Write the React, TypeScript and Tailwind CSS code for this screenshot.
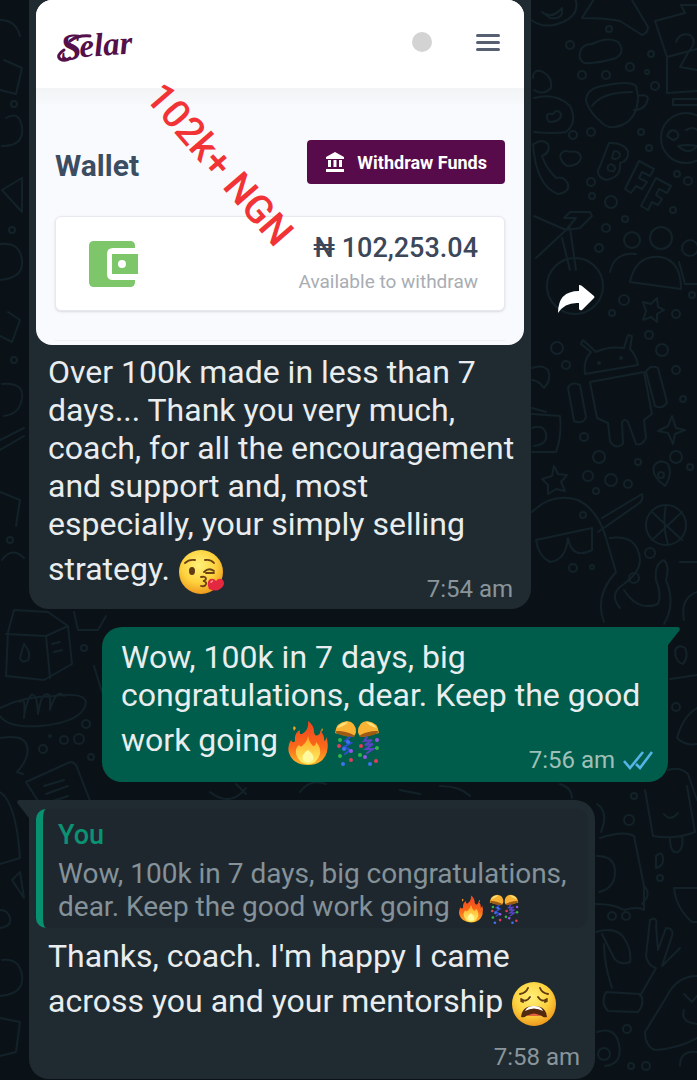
import type { ReactNode } from "react";

function Doodles() {
  return (
    <svg
      className="absolute inset-0 h-full w-full"
      viewBox="0 0 697 1080"
      preserveAspectRatio="xMidYMin slice"
      fill="none"
      stroke="#132128"
      strokeWidth="2"
      strokeLinecap="round"
      strokeLinejoin="round"
      aria-hidden="true"
    >
      {/* right side, top */}
      <path d="M531 20q14 10 32 2t12-24M542 12q10 8 20-4q2 12-12 10zM582 18l14-22M582 18q24 0 38 3l22 14q6-2 6-8l-16-27" />
      <path d="M580 52q2-8 12-8q16-8 26-2q8 10-2 16q-20 6-32 5q-6-4-4-11z" />
      <path d="M655 21l30-8l-4-8h16M655 21l12 36l30-8M667 57v36l30-2M676 42q4-10 14-7q8 6-1 16l-9 16l17 3M673 99h24M673 99v6h24" />
      <path d="M586 101q0-12 16-15q28-6 34 0l2 10q0 22-16 29q-14 6-22-4q-10-8-14-20zM592 106q10-14 40-14M638 96q8-2 10 2q-2 12-14 12" />
      <path d="M534 132q20 2 32 0q12-10 4-26q-14-14-36-8M549 122q-6-10 4-8q4-6 8 0q0 8-12 8zM533 78q0-10 10-6q10 6 8 16q-8 8-17 2" />
      <path d="M534 144q8-6 14 0q3 8-6 12q4 12 14 22q8-2 12 6q2 8-10 10q-22-8-25-50z" />
      <path d="M560 156q2-7 10-4q10-2 11 6q-2 8-14 8q-6-4-7-10z" />
      <path d="M609 143q14-1 19 8q1 10-8 12q2 14-14 17q-12-4-6-14zM614 151q6 0 6 5q-4 5-8 2zM611 164q6 2 3 7q-8 1-6-5z" />
      <path d="M639 161l15 8l-4 7l-8-4l-3 6l8 4l-5 7l-6-3l-5 7l-6-4zM656 178l15 8l-4 7l-8-4l-3 6l6 4l-4 6l-6-3l-4 8l-7-4z" />
      <circle cx="686" cy="138" r="25" />
      <path d="M667 136q4-9 10-4q4 6-4 8zM686 130q8-4 11 0M678 146q10-2 19 0q-8 10-19 0z" />
      <path d="M534 216l32 14l-30 28M566 230l14-2l12-12l-2-4h-20l-6 6h12l-10 12M562 238l8 32M570 228l6 42" />
      <circle cx="575" cy="286" r="28" />
      <circle cx="632" cy="240" r="8" />
      <circle cx="661" cy="238" r="11" />
      <circle cx="690" cy="248" r="8" />
      <path d="M630 282q6-28 31-25q20 4 20 32zM610 272q4-20 26-18M697 284h-12l-6-22M643 302l8 2l6-6l1 9l6 3l-7 4v8l-6-5l-8 3l3-9z" />
      {/* android */}
      <path d="M585 374q-2-14 6-22l-10-8l2-4l13 12q12-6 28-4l4-13l4 1l-2 13q6 6 8 16zM590 382l54-10l8 42l-8 6l2 18q-4 8-10 6l-8-22q-3-4-6 0l1 22q-8 6-13-3l-2-18l-11-5z" />
      <path d="M568 388q3-7 12-3l6 32q-3 8-12 4zM646 372q4-8 12-4l9 34q-4 8-12 4z" />
      <circle cx="599" cy="363" r="1" />
      <circle cx="621" cy="358" r="1" />
      <path d="M532 368q10-4 16 2q4 10-4 18q-6-8-12-8M532 414l28 2q2 20-4 36h-24M532 408l14 4M532 428q12-4 14 6t-12 12" />
      <path d="M672 416l4 12l9 2l-10 4l-2 10l-5-11l-10-2l10-5zM554 466l4 8l9 1l-6 7l4 9l-9-2l-8 5v-9l-6-6l10-3z" />
      <path d="M532 512q20-20 46-12q20 10 28 38l10 34q-22 24-12 50M536 540l56-12v22q-20 10-24-12q-2 22-18 24q-12-6-14-22zM602 518l40-24q2 6-4 10l-40 28" />
      <path d="M610 538q28-4 30 22q0 12-16 24q-16 10-4 24M624 590q14 22 34 14q4-10-2-24q-2-16 8-20q6 6 2 20q10 24-2 44" />
      <circle cx="666" cy="525" r="20" />
      <path d="M652 512l30 28M682 512l-30 28M666 505q-4 20 2 40M654 466q6-8 14-2q5 10-3 22q-14-10-11-20zM680 562h17M684 620q-4-22 13-28" />
      {/* lower right */}
      <path d="M675 650q4-6 10-2q4 8-2 16q-8-2-8-14M670 679l27-4M697 708q-14 8-20 30q8 8 20 6M668 770q12-4 20 4l9 26M645 790l8 46q22 4 42-4l-8-46M664 814q6 8 14-1M670 838q0 16 8 14q6-4 4-16" />
      <path d="M600 838q24-8 34-2l10 50q8 8-2 18M597 856q18 0 18 16t-16 20M597 804q12 8 4 28M656 856q6-6 7 2t-7 10z" />
      <path d="M596 904q18 0 28 6q14-4 20 0v-24M674 888q2 20 18 34h5M674 888h23M596 932q20-6 28 6t6 24q-10 4-16-4q-8-16-12-24M604 944q0 20 8 44" />
      <path d="M646 956l4-36q8-4 6 6l2 24l8-22q8 0 6 8l-10 30l18-18M646 956q2 10 10 12l-16 28M606 992l34 2q6 8-2 18l-30-1q-8-8-2-19z" />
      <path d="M697 976q-20 0-30 20l-22 36q0 14 10 18q24-2 42-12M684 994l8 8l5-6M684 1010q-4 12 13 14M597 1032q18-6 22 12q4 20-14 22" />
      <path d="M680 1066q0-16 17-14M400 790l20 4M440 786q20 0 30 10M560 784q12 4 12 14M300 792q10-14 26-8" />
      {/* left side */}
      <path d="M0 20q16 0 20 16M4 60l18 8l-6 26l-16-4M6 118q14-8 16 10t-20 18M2 190l20-12v34zM0 244q20-2 22 16t-22 20M8 312l12 8l-8 22l-12-6M2 384q22-2 20 14t-18 18M0 440l24-12M0 450l24-14M0 492l20 8l-4 26M2 560q10-14 22-2" />
      <path d="M14 610l34 2l20 14l4 38l-28 16l-38-4l2-44zM6 634l40 2l22-10M46 636l4 42M20 658q2-8 4-14q8 10 4 16q-6 4-8-2zM52 644l8-2M54 652l8-2" />
      <path d="M0 708q24-12 54-12q30-4 32 6q-2 20-46 24q-32 2-40-10M20 702q6-8 4 16M24 716q6-30 12-18q2 10 2 16q4-26 12-18v14q6-22 14-14" />
      <path d="M0 738q24-4 27 8t-10 26l6 2M26 782l44-20q6 0 8 8l14 36M26 782l14 22M44 786l20-6M46 794l22-8M50 802l18-6" />
      <path d="M0 792q16 10 20 66l-20 6M12 880l8-8l4 26zM0 910q8 0 10 8t-10 10M2 960q18-2 20 16t-22 20M0 1018l20 4l-4 30l-16 4" />
      <path d="M74 612l4 18h20l8-14M94 666l8 26M210 792q20 16 36-4M236 784l10 10" />
      {/* dots between the drawings */}
      {[
        [570, 45, 4], [609, 29, 3], [651, 54, 3], [582, 75, 4], [606, 75, 4], [630, 67, 4], [647, 72, 2], [655, 86, 4],
        [573, 135, 4], [591, 132, 4], [641, 132, 3], [649, 148, 3], [591, 182, 4], [611, 202, 6], [592, 196, 3],
        [677, 174, 3], [688, 181, 4], [673, 210, 3], [625, 219, 3], [606, 228, 4], [599, 248, 4], [624, 300, 5],
        [612, 313, 3], [676, 314, 4], [692, 295, 3], [557, 348, 6], [566, 365, 4], [649, 335, 4], [662, 350, 6],
        [676, 370, 4], [683, 399, 3], [584, 437, 4], [599, 457, 6], [638, 462, 3], [676, 457, 6], [588, 476, 5],
        [611, 480, 6], [628, 484, 4], [596, 491, 3], [690, 467, 3], [661, 475, 3], [583, 515, 3], [650, 553, 5],
        [573, 568, 4], [592, 567, 2], [634, 578, 5], [676, 707, 4], [629, 820, 5], [634, 796, 3], [660, 878, 3],
        [612, 916, 4], [626, 916, 4], [627, 1029, 4], [631, 1066, 3], [646, 1066, 4], [604, 1054, 6], [84, 648, 3],
        [86, 724, 4], [64, 740, 4], [79, 739, 5], [43, 749, 4], [91, 757, 3], [50, 736, 1], [14, 104, 3],
        [12, 230, 3], [14, 360, 3], [10, 540, 3],
      ].map(([x, y, r]) => (
        <circle key={`${x}-${y}`} cx={x} cy={y} r={r} />
      ))}
    </svg>
  );
}

function SelarLogo() {
  return (
    <svg className="h-[52px] w-20 overflow-visible" viewBox="0 0 80 52" fill="#541049" role="img" aria-label="Selar">
      <g fontFamily="'Liberation Serif', serif" fontWeight="700" fontStyle="italic" transform="rotate(-4 40 26)">
        <text x="4" y="42" fontSize="38">
          S
        </text>
        <text x="23" y="40" fontSize="33">
          elar
        </text>
      </g>
      <g fill="none" stroke="#541049" strokeWidth="3" strokeLinecap="round">
        <path d="M14 25q8-6 20-5" />
        <path d="M8 34q-8 5-4 9q5 3 10-1" />
      </g>
    </svg>
  );
}

function FaceGradient({ id }: { id: string }) {
  return (
    <radialGradient id={id} cx="0.45" cy="0.35" r="0.65">
      <stop offset="0" stopColor="#fff07a" />
      <stop offset="0.6" stopColor="#fdd23e" />
      <stop offset="1" stopColor="#ef9a1e" />
    </radialGradient>
  );
}

function KissEmoji() {
  return (
    <svg className="my-1.5 inline-block size-[46px] align-middle" viewBox="0 0 46 46" role="img" aria-label="Face blowing a kiss">
      <defs>
        <FaceGradient id="kiss" />
      </defs>
      <circle cx="23" cy="23" r="22" fill="url(#kiss)" />
      <g fill="none" stroke="#6b4216" strokeWidth="1.8" strokeLinecap="round">
        <path d="M7 14q4-4 10-3" />
        <path d="M27 11q6-1 9 3" />
        <path d="M26 23q5-5 10-1M28 24l8 0" />
        <path d="M23 28q5-1 5 2q-1 2-3 2q4 1 3 3q-1 3-5 2" />
      </g>
      <ellipse cx="14" cy="22" rx="3" ry="4" fill="#5f3b14" />
      <path d="M31 40q-3-7 1-10q4-1 6 2q3-4 7-1q3 5-3 9q-4 3-11 0z" fill="#e4283f" />
      <path d="M33 34q0-2 2-2" stroke="#ff8c98" strokeWidth="1.4" fill="none" />
    </svg>
  );
}

function WearyEmoji() {
  return (
    <svg className="my-1.5 inline-block size-[46px] align-middle" viewBox="0 0 46 46" role="img" aria-label="Weary face">
      <defs>
        <FaceGradient id="weary" />
      </defs>
      <circle cx="23" cy="23" r="22" fill="url(#weary)" />
      <g fill="none" stroke="#5f3b14" strokeWidth="1.9" strokeLinecap="round">
        <path d="M9 13q6-1 8-6" />
        <path d="M37 13q-6-1-8-6" />
        <path d="M10 18q5 4 9-2M12 21l-2-1" />
        <path d="M36 18q-5 4-9-2M34 21l2-1" />
      </g>
      <path d="M10 36q1-11 13-11t13 11q-4 1-5-1q-8-3-16 0q-1 2-5 1z" fill="#54280f" />
      <path d="M14 30q9-5 18 0q-2-5-9-5t-9 5z" fill="#fff" />
      <path d="M16 35q7-5 14 0z" fill="#e2603c" />
    </svg>
  );
}

function FireEmoji({ className }: { className: string }) {
  return (
    <svg className={className} viewBox="0 0 44 46" role="img" aria-label="Fire">
      <defs>
        <linearGradient id="flame" x1="0" y1="0" x2="0" y2="1">
          <stop offset="0" stopColor="#f0431f" />
          <stop offset="0.6" stopColor="#fb6a1a" />
          <stop offset="1" stopColor="#ffb62b" />
        </linearGradient>
        <linearGradient id="core" x1="0" y1="0" x2="0" y2="1">
          <stop offset="0" stopColor="#ffa41e" />
          <stop offset="1" stopColor="#fff36b" />
        </linearGradient>
      </defs>
      <path
        d="M22 1q6 4 6 11q1 5 4 3q3-1 2-5q5 6 4 11q3-1 2-5q3 7 1 16q-4 13-19 13T3 33q-2-7 2-13q2 4 4 1q-1-8 5-11q-1 5 2 4q7-4 6-13z"
        fill="url(#flame)"
      />
      <path d="M22 16q1 6 5 10q3 0 3-4q5 5 4 12q-3 10-12 10T10 34q-1-6 3-9q2 3 4 0q4-3 5-9z" fill="url(#core)" />
      <path d="M22 30q7 5 5 10q-5 5-10 0q-2-6 5-10z" fill="#fff9a0" />
      <path d="M8 6l2 2l-2 3l-1-3zM36 8l1 2l-2 2z" fill="#f7a325" />
    </svg>
  );
}

function ConfettiEmoji({ className }: { className: string }) {
  return (
    <svg className={className} viewBox="0 0 46 46" role="img" aria-label="Confetti ball">
      <path d="M1 13Q2 2 13 1q9 1 9 11q-1 5-5 5z" fill="#f9b233" />
      <path d="M45 13Q44 2 33 1q-9 1-9 11q1 5 5 5z" fill="#f9b233" />
      <path d="M3 8q4-6 11-6q-3 4-11 6zM43 8q-4-6-11-6q3 4 11 6z" fill="#ffe27a" />
      <ellipse cx="11" cy="14" rx="10" ry="2" transform="rotate(14 11 14)" fill="#9c5a14" />
      <ellipse cx="35" cy="14" rx="10" ry="2" transform="rotate(-14 35 14)" fill="#9c5a14" />
      <g fill="none" strokeWidth="2" strokeLinecap="round">
        <path d="M16 17l-5 4l6 2l-7 4l6 3l-5 4" stroke="#2f4fd0" />
        <path d="M33 17l-3 4l8-1l-7 5l8-1l-7 5l7 0l-6 4" stroke="#5a45c4" />
      </g>
      <g fill="#3f72f0">
        <circle cx="14" cy="22" r="2" />
        <circle cx="10" cy="29" r="2" />
        <circle cx="9" cy="44" r="2" />
        <circle cx="36" cy="44" r="2" />
      </g>
      <g fill="#9457e6">
        <circle cx="17" cy="31" r="2" />
        <circle cx="43" cy="20" r="2" />
        <circle cx="31" cy="37" r="2" />
      </g>
      <g fill="#33b34a">
        <circle cx="6" cy="20" r="2" />
        <circle cx="6" cy="36" r="2" />
        <circle cx="26" cy="35" r="2" />
        <circle cx="43" cy="28" r="2" />
      </g>
      <g fill="#e13d5c">
        <circle cx="5" cy="26" r="2" />
        <circle cx="17" cy="40" r="2" />
        <circle cx="27" cy="26" r="2" />
        <circle cx="42" cy="41" r="2" />
      </g>
    </svg>
  );
}

function WalletScreenshot() {
  return (
    <div className="relative overflow-hidden rounded-2xl bg-[#f9fafe] pb-1">
      <header className="flex h-[88px] items-center justify-between bg-white pr-6 pb-1 pl-5">
        <a href="#home">
          <SelarLogo />
        </a>
        <div className="flex items-center gap-11">
          <span className="size-5 rounded-full bg-[#d3d3d3]" />
          <button type="button" aria-label="Menu" className="flex w-6 flex-col gap-1">
            <span className="h-[3px] rounded bg-[#566072]" />
            <span className="h-[3px] rounded bg-[#566072]" />
            <span className="h-[3px] rounded bg-[#566072]" />
          </button>
        </div>
      </header>
      <div className="h-4 bg-linear-to-b from-[#f3f4f6] to-[#f6f8fb]" />

      <div className="px-[19px] pt-9">
        <div className="flex items-center justify-between">
          <h2 className="pt-2 text-[30px] leading-9 font-bold text-[#3c4d62]">Wallet</h2>
          <button
            type="button"
            className="flex h-11 items-center gap-3 rounded bg-[#580b4b] px-[18px] text-[18px] font-bold text-white"
          >
            <svg className="size-5" viewBox="0 0 20 20" fill="currentColor" aria-hidden="true">
              <path d="M10 0l9 5v2H1V5zM3 8h3v7H3zM8.500 8h3v7h-3zM14 8h3v7h-3zM1 17h18v3H1z" />
            </svg>
            Withdraw Funds
          </button>
        </div>

        <div className="mt-8 flex h-[95px] items-center justify-between rounded-md border border-[#e6e9f0] bg-white pr-[26px] pl-[33px] shadow-sm">
          <svg className="h-[46px] w-[50px]" viewBox="0 0 50 46" aria-hidden="true">
            <path
              d="M5 0h36q5 0 5 5v2H24q-6 0-6 6v20q0 6 6 6h22v2q0 5-5 5H5q-5 0-5-5V5q0-5 5-5z"
              fill="#7dc66a"
            />
            <path d="M23 13h26v20H23zM33 19a4 4 0 1 0 0 8a4 4 0 1 0 0-8z" fillRule="evenodd" fill="#7dc66a" />
          </svg>
          <div className="text-right">
            <p className="text-[27px] leading-8 font-medium text-[#3c4759]">₦ 102,253.04</p>
            <p className="mt-1 text-[19px] leading-7 text-[#a8adb3]">Available to withdraw</p>
          </div>
        </div>
        <div className="mt-[29px] h-[1px] bg-[#eef0f4]" />
      </div>

      <p className="absolute top-[165px] left-[183px] -translate-x-1/2 -translate-y-1/2 rotate-[49deg] text-[39px] leading-none font-medium whitespace-nowrap text-[#f23336]">
        102k+ NGN
      </p>
    </div>
  );
}

function Time({ children }: { children: ReactNode }) {
  return <time className="text-[24px] leading-8 text-[#8a959b]">{children}</time>;
}

export default function App() {
  return (
    <main className="relative min-h-screen overflow-hidden bg-[#0a1218] font-['Roboto',sans-serif] text-[#e9edef]">
      <Doodles />

      <div className="relative flex flex-col">
        <section className="flex items-center gap-[26px] pl-[29px]">
          <article className="w-[502px] rounded-b-[20px] bg-[#202b31] px-[7px] pb-1">
            <WalletScreenshot />
            <p className="pt-2 pr-1.5 pl-3 text-[32px] leading-[38px]">
              Over 100k made in less than 7 days... Thank you very much, coach, for all the encouragement and support
              and, most especially, your simply selling strategy. <KissEmoji />
            </p>
            <p className="-mt-7 flex justify-end pr-[11px]">
              <Time>7:54 am</Time>
            </p>
          </article>
          <button type="button" aria-label="Forward" className="mb-3">
            <svg className="h-7 w-[38px]" viewBox="0 0 38 28" fill="#fff">
              <path d="M22 0q2 0 3 1l12 10q1 1 0 2L25 25q-2 1-3-1v-6Q8 17 1 28q0-22 21-22z" />
            </svg>
          </button>
        </section>

        <section className="mt-[18px] flex justify-end pr-[29px]">
          <article className="relative w-[566px] rounded-[20px] rounded-tr-none bg-[#005d4b] px-[19px] pt-[11px] pb-1.5">
            <svg className="absolute top-0 left-full h-5 w-3" viewBox="0 0 12 20" fill="#005d4b" aria-hidden="true">
              <path d="M0 0h10q3 1 1 4L0 18z" />
            </svg>
            <p className="text-[32px] leading-[38px]">
              Wow, 100k in 7 days, big congratulations, dear. Keep the good work going{" "}
              <FireEmoji className="my-1.5 inline-block h-[46px] w-11 align-middle" />
              <ConfettiEmoji className="my-1.5 ml-1 inline-block size-[46px] align-middle" />
            </p>
            <p className="-mt-7 -mr-1 flex items-center justify-end gap-2">
              <time className="text-[24px] leading-8 text-[#9fc0b8]">7:56 am</time>
              <svg className="h-5 w-[30px]" viewBox="0 0 30 20" fill="none" stroke="#53b4e6" strokeWidth="2.6" aria-label="Read">
                <path d="M1 11l6 7L20 2M13 14l4 4L29 2" />
              </svg>
            </p>
          </article>
        </section>

        <section className="mt-[18px] flex pl-[29px]">
          <article className="relative w-[566px] rounded-[20px] rounded-tl-none bg-[#202b31] px-[7px] pt-[9px] pb-1.5">
            <svg className="absolute top-0 right-full h-5 w-3" viewBox="0 0 12 20" fill="#202b31" aria-hidden="true">
              <path d="M12 0H2q-3 1-1 4l11 14z" />
            </svg>
            <blockquote className="overflow-hidden rounded-[10px] border-l-[7px] border-[#089171] bg-[#1f272e] pt-2 pb-1 pl-[15px]">
              <p className="text-[27px] leading-9 font-medium text-[#0b9273]">You</p>
              <p className="mt-1 text-[28px] leading-[33px] text-[#84929a]">
                Wow, 100k in 7 days, big congratulations, dear. Keep the good work going{" "}
                <FireEmoji className="inline-block h-7 w-7 align-middle" />
                <ConfettiEmoji className="ml-1 inline-block size-[30px] align-middle" />
              </p>
            </blockquote>
            <p className="px-3 pt-[9px] text-[32px] leading-[38px]">
              Thanks, coach. I'm happy I came across you and your mentorship <WearyEmoji />
            </p>
            <p className="mt-2 flex justify-end pr-2">
              <Time>7:58 am</Time>
            </p>
          </article>
        </section>
      </div>
    </main>
  );
}
